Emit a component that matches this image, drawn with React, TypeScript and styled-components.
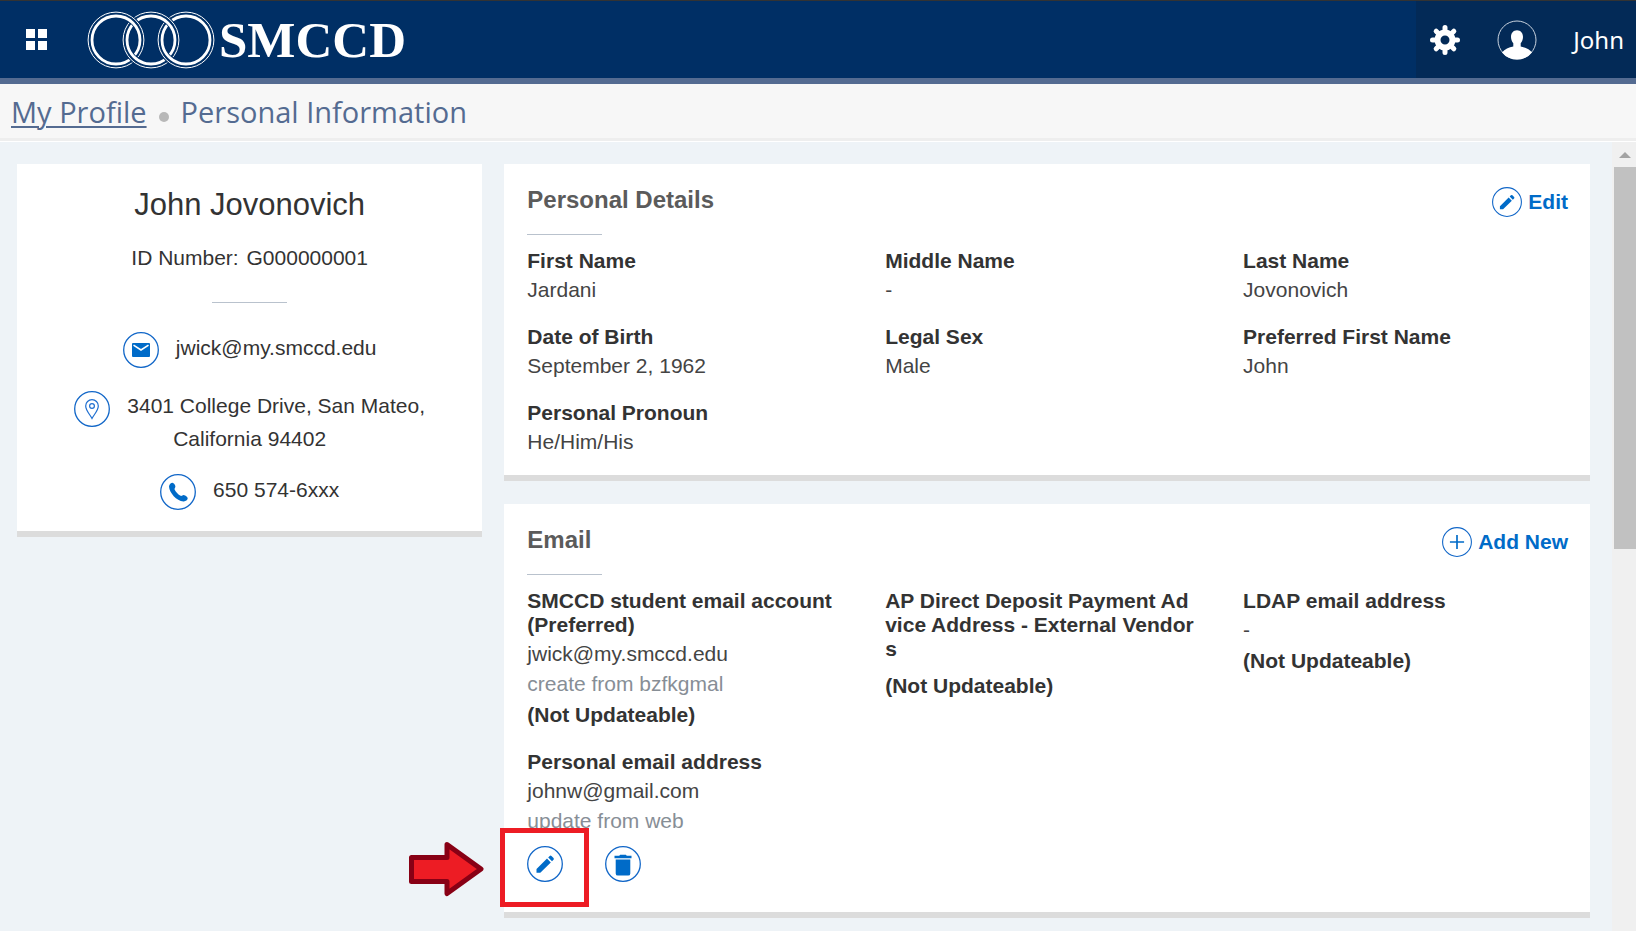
import React from "react";
import styled, { createGlobalStyle } from "styled-components";

const GlobalStyle = createGlobalStyle`
  *, *::before, *::after { box-sizing: border-box; }
  html, body, #root { height: 100%; }
  body {
    margin: 0;
    background: #eef3f7;
    color: #333;
    font-family: "Liberation Sans", Arial, sans-serif;
    font-size: 21px;
    line-height: 24px;
  }
  h1, h2, p, dl, dd, ol { margin: 0; padding: 0; }
  button { font: inherit; border: 0; padding: 0; background: none; cursor: pointer; }
`;

const Page = styled.div`
  display: flex;
  flex-direction: column;
  height: 100vh;
  overflow: hidden;
`;

const Header = styled.header`
  display: flex;
  flex: none;
  height: 84px;
  border-top: 1px solid #333;
  border-bottom: 6px solid #546b91;
  background: #002f65;
  color: #fff;
`;

const Brand = styled.div`
  display: flex;
  flex: 1;
  align-items: center;
  padding-left: 26px;
`;

const MenuButton = styled.button`
  display: grid;
  grid-template-columns: 9px 9px;
  grid-auto-rows: 9px;
  gap: 3px;
  margin-right: 40px;
  span { background: #fff; }
`;

const Logo = styled.a`
  display: flex;
  align-items: center;
  gap: 4px;
  color: #fff;
  text-decoration: none;
  font: bold 51px/60px "Liberation Serif", "Times New Roman", serif;
`;

const UserArea = styled.div`
  display: flex;
  align-items: center;
  padding: 0 12px 0 14px;
  background: #032a57;
  font: 24px/32px "Noto Sans", "Open Sans", sans-serif;
`;

const HeaderButton = styled.button<{ $gap?: number }>`
  display: flex;
  color: #fff;
  margin-right: ${(p) => p.$gap ?? 0}px;
`;

const Crumbs = styled.nav`
  flex: none;
  height: 58px;
  border-bottom: 1px solid #fff;
  background: #f7f7f7;
  box-shadow: inset 0 -3px #eee;
  color: #546b91;
  font: 29px/56px "Open Sans", "Noto Sans", sans-serif;
  ol { display: flex; align-items: center; list-style: none; padding-left: 11px; }
  a { color: inherit; text-underline-offset: 3px; text-decoration-thickness: 2px; }
`;

const Dot = styled.li`
  width: 10px;
  height: 10px;
  margin: 10px 12px 0;
  border-radius: 50%;
  background: #b8b8b8;
`;

const Body = styled.div`
  display: flex;
  flex: 1;
  min-height: 0;
`;

const Content = styled.main`
  display: grid;
  flex: 1;
  grid-template-columns: 3fr 7fr;
  align-items: start;
  column-gap: 22px;
  padding: 22px 22px 0 17px;
  overflow: hidden;
`;

const Column = styled.div`
  display: grid;
  gap: 23px;
`;

const Card = styled.section`
  background: #fff;
  border-bottom: 6px solid #dcdcdc;
`;

const ProfileCard = styled(Card)`
  display: flex;
  flex-direction: column;
  align-items: center;
  padding: 23px 24px 25px;
`;

const Name = styled.h1`
  font-size: 31px;
  font-weight: 400;
  line-height: 36px;
`;

const IdNumber = styled.p`
  margin-top: 23px;
  span { margin-left: 2px; }
`;

const Rule = styled.div<{ $top: number }>`
  width: 75px;
  height: 1px;
  margin-top: ${(p) => p.$top}px;
  background: #b9c2cd;
`;

const Contact = styled.p<{ $top: number }>`
  margin-top: ${(p) => p.$top}px;
  line-height: 32px;
  text-align: center;
  svg { margin: -2px 17px -4px 0; vertical-align: middle; }
`;

const DetailCard = styled(Card)<{ $bottom: number }>`
  padding: 23px 22px ${(p) => p.$bottom}px 23px;
`;

const CardHead = styled.div`
  display: flex;
  justify-content: space-between;
  h2 { font-size: 24px; line-height: 25px; color: #5b5b5b; }
`;

const Action = styled.button`
  display: flex;
  align-items: center;
  gap: 6px;
  height: 30px;
  color: #006bc8;
  font-weight: 700;
`;

const Fields = styled.dl`
  display: grid;
  grid-template-columns: repeat(3, 1fr);
  align-items: start;
  gap: 23px 33px;
  margin-top: 14px;
`;

const Field = styled.div`
  padding-right: 12px;
  dt { font-weight: 700; word-break: break-all; }
  dd { margin-top: 5px; color: #444; }
`;

const Label = styled.dt<{ $words?: boolean }>`
  && { word-break: ${(p) => (p.$words ? "normal" : "break-all")}; }
`;

const Source = styled.dd`
  && { margin-top: 6px; color: #878e96; }
`;

const Note = styled.dd<{ $top?: number }>`
  && { margin-top: ${(p) => p.$top ?? 7}px; color: #333; font-weight: 700; }
`;

const RowActions = styled.dd`
  && { display: flex; gap: 42px; margin-top: 13px; }
`;

const Target = styled.span`
  position: relative;
  display: flex;
`;

const Highlight = styled.span`
  position: absolute;
  top: -18px;
  left: -27px;
  width: 89px;
  height: 79px;
  border: 5px solid #ed1c24;
  pointer-events: none;
`;

const Pointer = styled.svg`
  position: absolute;
  top: -5px;
  left: -119px;
  pointer-events: none;
`;

const IconButton = styled.button`
  display: flex;
`;

const ScrollTrack = styled.div`
  flex: none;
  width: 24px;
  padding: 10px 0 0 2px;
  background: #f0f0f0;
  svg { display: block; margin: 0 auto 9px; }
`;

const Thumb = styled.div`
  height: 382px;
  background: #c1c1c1;
`;

type IconName = "pencil" | "plus" | "mail" | "pin" | "phone" | "trash";

const glyphs: Record<IconName, React.ReactNode> = {
  pencil: (
    <path
      fill="#006bc8"
      d="M9.500 23 20 12.600l3.800 3.800L13.300 26.700H9.500ZM21.200 11.400l1.500-1.500a1.300 1.300 0 0 1 1.800 0l2 2a1.300 1.300 0 0 1 0 1.800l-1.500 1.500Z"
    />
  ),
  plus: <path stroke="#006bc8" strokeWidth="2" d="M18 9.500v17M9.500 18h17" />,
  mail: (
    <>
      <rect x="9" y="11" width="18" height="14" rx="1" fill="#006bc8" />
      <path d="M10.500 13.200 18 18l7.500-4.800" fill="none" stroke="#fff" strokeWidth="1.600" />
    </>
  ),
  pin: (
    <g fill="none" stroke="#1f6fd0" strokeWidth="1.200">
      <path d="M18 27.500c-2-4-6.300-8-6.300-12.500a6.300 6.300 0 0 1 12.600 0c0 4.500-4.300 8.500-6.300 12.500Z" />
      <circle cx="18" cy="15" r="2.400" />
    </g>
  ),
  phone: (
    <path
      fill="#006bc8"
      d="M9 12.400c.2-2 2-3.600 3.500-3.600 1.200 0 2.800 2.400 2.900 3.500.1 1.300-1.200 2-.8 3.200.9 2.200 3.700 5.200 6 6.300 1.200.4 2-.9 3.200-.8 1.400.2 3.900 2.100 3.900 3.300 0 1.700-2.300 3.300-4.200 3.100C16.400 26.800 9.400 18.700 9 12.400Z"
    />
  ),
  trash: (
    <path
      fill="#006bc8"
      d="M9.500 9.800h4.700l1-1h5.600l1 1h4.700v2.400h-17ZM10.700 13.400h14.600v14a2.200 2.200 0 0 1-2.200 2.200H12.900a2.200 2.200 0 0 1-2.200-2.200Z"
    />
  ),
};

function CircleIcon({ name, size = 36 }: { name: IconName; size?: number }) {
  return (
    <svg width={size} height={size} viewBox="0 0 36 36" aria-hidden="true">
      <circle cx="18" cy="18" r="17.300" fill="none" stroke="#1267c8" strokeWidth="1.300" />
      {glyphs[name]}
    </svg>
  );
}

function Ring({ cx }: { cx: number }) {
  return (
    <g>
      <circle cx={cx} cy="29" r="25.500" stroke="#002f65" strokeWidth="7.500" />
      <circle cx={cx} cy="29" r="27.900" strokeWidth="1" />
      <circle cx={cx} cy="29" r="24" strokeWidth="2.800" />
    </g>
  );
}

/* Three linked rings: each passes over its right neighbour at the top and under it at the bottom. */
function Rings() {
  return (
    <svg width="128" height="58" viewBox="0 0 128 58" fill="none" stroke="#fff" aria-hidden="true">
      <clipPath id="lower-left-link"><rect x="36" y="34" width="21" height="24" /></clipPath>
      <clipPath id="lower-right-link"><rect x="71" y="34" width="21" height="24" /></clipPath>
      <Ring cx={99} />
      <Ring cx={64} />
      <Ring cx={29} />
      <g clipPath="url(#lower-left-link)"><Ring cx={64} /></g>
      <g clipPath="url(#lower-right-link)"><Ring cx={99} /></g>
    </svg>
  );
}

function Gear() {
  return (
    <svg width="30" height="30" viewBox="0 0 30 30" aria-hidden="true">
      <g stroke="#fff" strokeWidth="5" strokeLinecap="round">
        {[0, 45, 90, 135].map((a) => (
          <path key={a} d="M15 2.500v5M15 22.500v5" transform={`rotate(${a} 15 15)`} />
        ))}
      </g>
      <circle cx="15" cy="15" r="7.500" fill="none" stroke="#fff" strokeWidth="6" />
    </svg>
  );
}

function Avatar() {
  return (
    <svg width="40" height="40" viewBox="0 0 40 40" aria-hidden="true">
      <circle cx="20" cy="20" r="19" fill="none" stroke="#c8d2de" strokeWidth="1" />
      <path
        fill="#fff"
        d="M20 10.300c3.600 0 6 2.800 6 6.700 0 2.600-1 4.800-2.300 6.200v3.200c4.400.8 8.600 2.600 11.300 6A19.200 19.200 0 0 1 5 32.400c2.700-3.400 6.900-5.200 11.300-6v-3.200C15 21.800 14 19.600 14 17c0-3.900 2.400-6.700 6-6.700Z"
      />
    </svg>
  );
}

const details = [
  ["First Name", "Jardani"],
  ["Middle Name", "-"],
  ["Last Name", "Jovonovich"],
  ["Date of Birth", "September 2, 1962"],
  ["Legal Sex", "Male"],
  ["Preferred First Name", "John"],
  ["Personal Pronoun", "He/Him/His"],
];

export default function App() {
  return (
    <Page>
      <GlobalStyle />
      <Header>
        <Brand>
          <MenuButton aria-label="Menu">
            <span /><span /><span /><span />
          </MenuButton>
          <Logo href="#">
            <Rings />
            SMCCD
          </Logo>
        </Brand>
        <UserArea>
          <HeaderButton aria-label="Settings" $gap={37}><Gear /></HeaderButton>
          <HeaderButton aria-label="Account" $gap={36}><Avatar /></HeaderButton>
          <HeaderButton>John</HeaderButton>
        </UserArea>
      </Header>
      <Crumbs aria-label="Breadcrumb">
        <ol>
          <li><a href="#">My Profile</a></li>
          <Dot aria-hidden="true" />
          <li>Personal Information</li>
        </ol>
      </Crumbs>
      <Body>
        <Content>
          <ProfileCard>
            <Name>John Jovonovich</Name>
            <IdNumber>ID Number: <span>G000000001</span></IdNumber>
            <Rule $top={32} />
            <Contact $top={29}>
              <CircleIcon name="mail" />
              jwick@my.smccd.edu
            </Contact>
            <Contact $top={26}>
              <CircleIcon name="pin" />
              3401 College Drive, San Mateo,
              <br />
              California 94402
            </Contact>
            <Contact $top={19}>
              <CircleIcon name="phone" />
              650 574-6xxx
            </Contact>
          </ProfileCard>
          <Column>
            <DetailCard $bottom={21}>
              <CardHead>
                <h2>Personal Details</h2>
                <Action><CircleIcon name="pencil" size={30} />Edit</Action>
              </CardHead>
              <Rule $top={17} />
              <Fields>
                {details.map(([label, value]) => (
                  <Field key={label}>
                    <dt>{label}</dt>
                    <dd>{value}</dd>
                  </Field>
                ))}
              </Fields>
            </DetailCard>
            <DetailCard $bottom={30}>
              <CardHead>
                <h2>Email</h2>
                <Action><CircleIcon name="plus" size={30} />Add New</Action>
              </CardHead>
              <Rule $top={17} />
              <Fields>
                <Field>
                  <Label $words>SMCCD student email account (Preferred)</Label>
                  <dd>jwick@my.smccd.edu</dd>
                  <Source>create from bzfkgmal</Source>
                  <Note>(Not Updateable)</Note>
                </Field>
                <Field>
                  <Label>AP Direct Deposit Payment Advice Address - External Vendors</Label>
                  <Note $top={13}>(Not Updateable)</Note>
                </Field>
                <Field>
                  <Label>LDAP email address</Label>
                  <dd>-</dd>
                  <Note>(Not Updateable)</Note>
                </Field>
                <Field>
                  <Label>Personal email address</Label>
                  <dd>johnw@gmail.com</dd>
                  <Source>update from web</Source>
                  <RowActions>
                    <Target>
                      <IconButton aria-label="Edit email"><CircleIcon name="pencil" /></IconButton>
                      <Highlight />
                      <Pointer width="76" height="56" viewBox="0 0 76 56" aria-hidden="true">
                        <path
                          d="M3.500 16.500h35.500V3.500L73 28 39 52.500V40.500H3.500Z"
                          fill="#ed1c24"
                          stroke="#880015"
                          strokeWidth="5"
                          strokeLinejoin="round"
                        />
                      </Pointer>
                    </Target>
                    <IconButton aria-label="Delete email"><CircleIcon name="trash" /></IconButton>
                  </RowActions>
                </Field>
              </Fields>
            </DetailCard>
          </Column>
        </Content>
        <ScrollTrack>
          <svg width="12" height="6" viewBox="0 0 12 6" aria-hidden="true"><path fill="#a3a3a3" d="M6 0l6 6H0Z" /></svg>
          <Thumb />
        </ScrollTrack>
      </Body>
    </Page>
  );
}
